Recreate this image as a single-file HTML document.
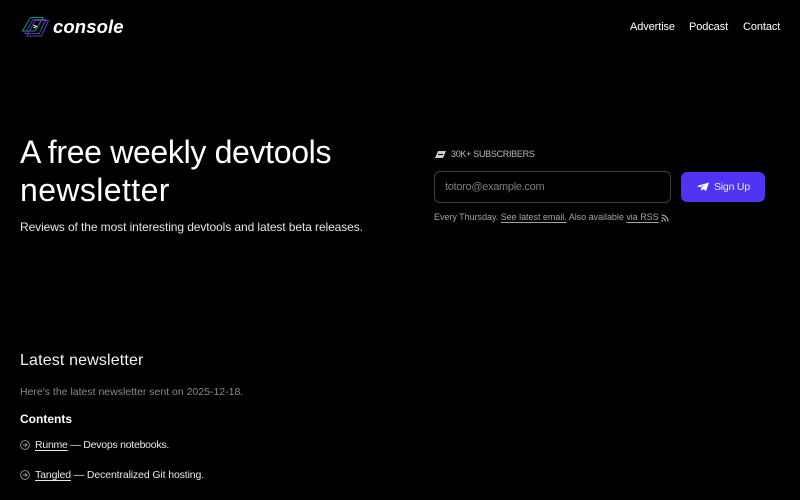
<!DOCTYPE html>
<html><head><meta charset="utf-8">
<style>
html,body{margin:0;padding:0;background:#000;width:800px;height:500px;overflow:hidden}
body{position:relative;font-family:"Liberation Sans",sans-serif;color:#fff}
.t{position:absolute;white-space:nowrap;line-height:1}
a{color:inherit;text-decoration:underline;text-underline-offset:2px}
svg{position:absolute}
</style></head><body>
<svg style="left:20px;top:14px" width="30" height="24" viewBox="0 0 30 24" fill="none">
<path d="M10.5 3.5H23L15 17H2.5Z" stroke="#1f8a70" stroke-width="1.1"/>
<path d="M13 5.5H26L19 19.5H5Z" stroke="#2a4fa0" stroke-width="1.1"/>
<path d="M15 6.5H28.5L21.5 22H7Z" stroke="#6a2fb0" stroke-width="1.1"/>
<path d="M13.5 11l3 1.5-3 1.5" stroke="#eee" stroke-width="1"/>
</svg>
<div class="t" style="left:53px;top:18px;font-size:18.5px;font-weight:700;font-style:italic;letter-spacing:.1px">console</div>
<div class="t" style="left:630px;top:22px;font-size:11px;letter-spacing:-.1px">Advertise</div>
<div class="t" style="left:689px;top:22px;font-size:11px;letter-spacing:-.1px">Podcast</div>
<div class="t" style="left:743px;top:22px;font-size:11px;letter-spacing:-.1px">Contact</div>
<div class="t" style="left:20px;top:136px;font-size:32px;letter-spacing:-.33px">A free weekly devtools</div>
<div class="t" style="left:20px;top:174px;font-size:32px;letter-spacing:.4px">newsletter</div>
<div class="t" style="left:20px;top:221px;font-size:12px;color:#e5e5e5;letter-spacing:-.09px">Reviews of the most interesting devtools and latest beta releases.</div>
<svg style="left:435px;top:150px" width="11" height="9" viewBox="0 0 11 9"><path d="M3 1H11L8 8H0Z" fill="#ccc"/><path d="M3 4.5H8" stroke="#000"/></svg>
<div class="t" style="left:451px;top:150px;font-size:9px;letter-spacing:-.3px;color:#b8b8b8">30K+ SUBSCRIBERS</div>
<div style="position:absolute;left:434px;top:171px;width:235px;height:30px;border:1px solid #3a3d42;border-radius:6px"></div>
<div class="t" style="left:445px;top:182px;font-size:11px;letter-spacing:-.3px;color:#7d7d7d">totoro@example.com</div>
<div style="position:absolute;left:681px;top:172px;width:84px;height:30px;background:#4f35f3;border-radius:6px"></div>
<svg style="left:697px;top:182px" width="12" height="10" viewBox="0 0 12 10"><path d="M0 4L12 .5 9 9 6 7 4.5 9 4 5.8 9 2.2 3 5.2Z" fill="#fff"/></svg>
<div class="t" style="left:714px;top:182px;font-size:10.5px;letter-spacing:-.2px;color:#e8e6ff">Sign Up</div>
<div class="t" style="left:434px;top:213px;font-size:9px;letter-spacing:-.03px;color:#a3a3a3">Every Thursday. <a href="#">See latest email.</a> Also available <a href="#">via RSS</a></div>
<svg style="left:661px;top:214px" width="8" height="8" viewBox="0 0 8 8" fill="none" stroke="#bbb" stroke-width="1.1"><path d="M.5 1A6.5 6.5 0 0 1 7 7.5M.5 3.7A3.8 3.8 0 0 1 4.3 7.5"/><circle cx="1.3" cy="6.7" r=".8" fill="#bbb" stroke="none"/></svg>
<div class="t" style="left:20px;top:353px;font-size:16px;letter-spacing:.15px;color:#f2f2f2">Latest newsletter</div>
<div class="t" style="left:20px;top:387px;font-size:10.5px;color:#8a8a8a">Here's the latest newsletter sent on 2025-12-18.</div>
<div class="t" style="left:20px;top:413px;font-size:12px;font-weight:700">Contents</div>
<svg style="left:20px;top:440px" width="10" height="10" viewBox="0 0 10 10" fill="none" stroke="#999"><circle cx="5" cy="5" r="4.4" stroke-width=".9"/><path d="M2.6 5H7M5.3 3.2L7 5 5.3 6.8" stroke-width=".9"/></svg>
<div class="t" style="left:35px;top:440px;font-size:10.5px;letter-spacing:-.24px;color:#e8e8e8"><a href="#">Runme</a> — Devops notebooks.</div>
<svg style="left:20px;top:470px" width="10" height="10" viewBox="0 0 10 10" fill="none" stroke="#999"><circle cx="5" cy="5" r="4.4" stroke-width=".9"/><path d="M2.6 5H7M5.3 3.2L7 5 5.3 6.8" stroke-width=".9"/></svg>
<div class="t" style="left:35px;top:470px;font-size:10.5px;letter-spacing:-.12px;color:#e8e8e8"><a href="#">Tangled</a> — Decentralized Git hosting.</div>
</body></html>
